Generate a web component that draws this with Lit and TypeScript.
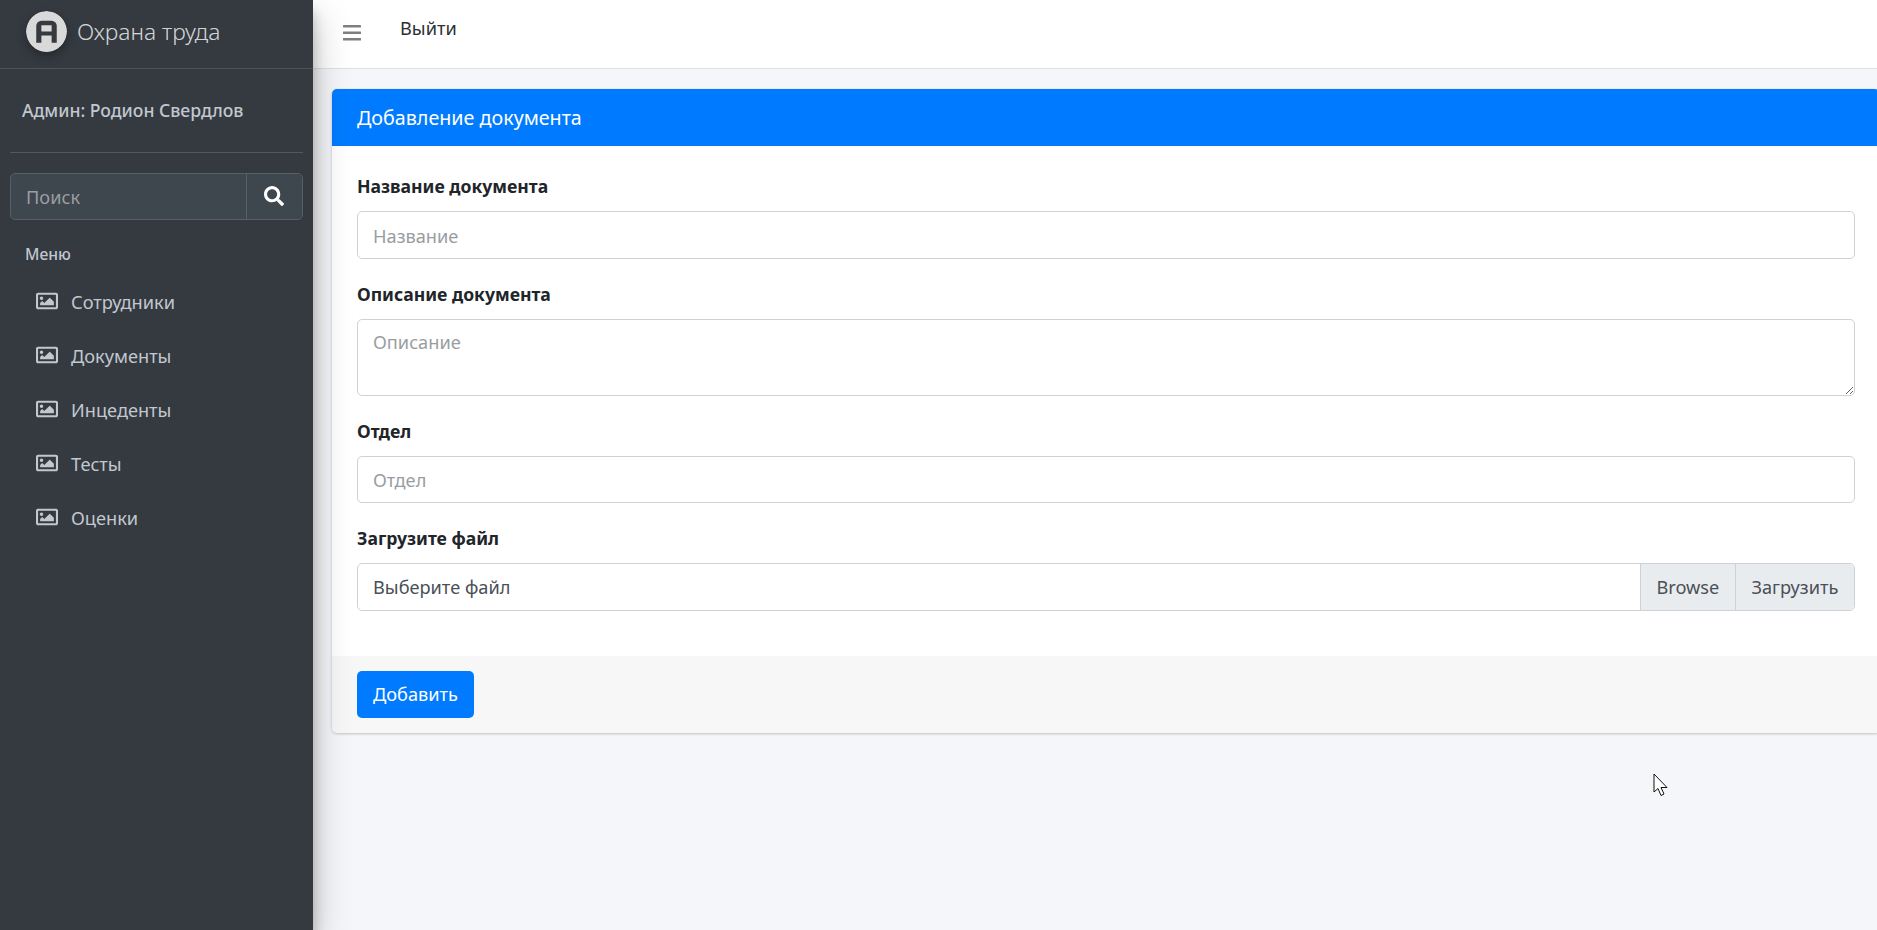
import { css, html, LitElement, svg } from 'lit';
import { customElement } from 'lit/decorators.js';

const imageIcon = svg`<path d="M464 64H48C21.49 64 0 85.49 0 112v288c0 26.51 21.49 48 48 48h416c26.51 0 48-21.49 48-48V112c0-26.51-21.49-48-48-48zm-6 336H54a6 6 0 0 1-6-6V118a6 6 0 0 1 6-6h404a6 6 0 0 1 6 6v276a6 6 0 0 1-6 6zM128 152c-22.091 0-40 17.909-40 40s17.909 40 40 40 40-17.909 40-40-17.909-40-40-40zM96 352h320v-80l-87.515-87.515c-4.686-4.686-12.284-4.686-16.971 0L192 304l-39.515-39.515c-4.686-4.686-12.284-4.686-16.971 0L96 304v48z"/>`;

const menu = ['Сотрудники', 'Документы', 'Инцеденты', 'Тесты', 'Оценки'];

@customElement('app-root')
export class AppRoot extends LitElement {
  static override styles = css`
    :host {
      display: flex;
      height: 100vh;
      overflow: hidden;
      position: relative;
      background: #f4f6f9;
      color: #212529;
      font-family: 'Noto Sans', sans-serif;
      font-size: 18.2px;
      line-height: 1.5;
    }

    * {
      box-sizing: border-box;
    }

    .sidebar {
      flex: 0 0 313px;
      min-width: 0;
      position: relative;
      z-index: 2;
      background: #343a40;
      color: #c2c7d0;
      box-shadow: 0 17px 35px rgba(0, 0, 0, 0.25), 0 12px 12px rgba(0, 0, 0, 0.22);
    }

    .brand {
      height: 69px;
      display: flex;
      align-items: center;
      gap: 10px;
      padding: 0 0 5px 26px;
      border-bottom: 1px solid #4b545c;
      color: rgba(255, 255, 255, 0.8);
      font-size: 22.8px;
      font-weight: 300;
    }

    .brand span {
      padding-top: 2px;
    }

    .logo {
      width: 41px;
      height: 41px;
      border-radius: 50%;
      box-shadow: 0 4px 10px rgba(0, 0, 0, 0.3);
    }

    .user {
      margin: 0 10px;
      padding: 28px 12px 29px;
      border-bottom: 1px solid #4f5962;
      font-size: 17.6px;
      font-weight: 500;
      line-height: 26px;
      white-space: nowrap;
    }

    .search {
      display: flex;
      height: 47px;
      margin: 20px 10px 0;
      border: 1px solid #56606a;
      border-radius: 5px;
      background: #3f474e;
      overflow: hidden;
    }

    .search input {
      flex: 1;
      min-width: 0;
      padding: 2px 15px 0;
      border: 0;
      outline: 0;
      background: transparent;
      font: inherit;
      color: #fff;
    }

    .search input::placeholder {
      color: #9a9ea3;
    }

    .search button {
      flex: 0 0 56px;
      display: flex;
      align-items: center;
      justify-content: center;
      padding: 0 2px 2px 0;
      border: 0;
      border-left: 1px solid #56606a;
      background: #3f474e;
      color: #fff;
    }

    .search svg {
      width: 20px;
      height: 20px;
      fill: currentColor;
    }

    .menu-title {
      padding: 22px 25px 0;
      font-size: 15.7px;
      font-weight: 500;
      line-height: 24px;
    }

    .menu {
      list-style: none;
      margin: 9px 0 0;
      padding: 0;
    }

    .menu li {
      display: flex;
      align-items: center;
      gap: 13px;
      height: 54px;
      padding: 2px 0 0 36px;
    }

    .menu svg {
      width: 22px;
      height: 22px;
      margin-top: -5px;
      fill: currentColor;
    }

    .main {
      flex: 1;
      min-width: 0;
    }

    .topnav {
      height: 69px;
      display: flex;
      align-items: flex-start;
      background: #fff;
      border-bottom: 1px solid #dee2e6;
    }

    .bars {
      width: 18px;
      height: 20px;
      margin: 23px 0 0 30px;
      fill: rgba(0, 0, 0, 0.5);
    }

    .logout {
      margin: 15px 0 0 39px;
      color: #2c3034;
    }

    .content {
      padding: 20px 0 0 19px;
    }

    .card {
      width: 1548px;
      background: #fff;
      border-radius: 5px;
      overflow: hidden;
      box-shadow: 0 0 1px rgba(0, 0, 0, 0.125), 0 1px 3px rgba(0, 0, 0, 0.2);
    }

    .card-head {
      height: 57px;
      display: flex;
      align-items: center;
      padding: 0 25px;
      background: #007bff;
      color: #fff;
      font-size: 19.7px;
    }

    .card-body {
      display: flex;
      flex-direction: column;
      padding: 25px 25px 45px;
    }

    label {
      font-size: 17.6px;
      font-weight: 700;
      line-height: 30px;
      margin-bottom: 10px;
    }

    .field {
      margin-bottom: 20px;
    }

    .control {
      display: block;
      width: 100%;
      height: 47.5px;
      padding: 2px 15px 0;
      border: 1px solid #ced2d6;
      border-radius: 5px;
      outline: 0;
      background: #fff;
      font: inherit;
      color: #495057;
    }

    .control::placeholder {
      color: #999da1;
    }

    textarea.control {
      height: 77px;
      padding-top: 9px;
      resize: vertical;
    }

    .file {
      display: flex;
      height: 48px;
      border: 1px solid #ced2d6;
      border-radius: 5px;
      overflow: hidden;
      color: #495057;
    }

    .file span {
      display: flex;
      align-items: center;
      padding: 1px 15px 0;
    }

    .file .name {
      flex: 1;
    }

    .file .addon {
      padding: 1px 15.6px 0;
      background: #e9ecef;
      border-left: 1px solid #ced2d6;
    }

    .card-foot {
      height: 77px;
      padding: 15px 25px 0;
      background: #f7f7f7;
    }

    .btn {
      height: 47px;
      padding: 0 16px;
      border: 0;
      border-radius: 5px;
      background: #007bff;
      color: #fff;
      font: inherit;
    }

    .cursor {
      position: absolute;
      left: 1653px;
      top: 773px;
      width: 17px;
      height: 24px;
    }
  `;

  override render() {
    return html`
      <aside class="sidebar">
        <div class="brand">
          <svg class="logo" viewBox="0 0 40 40">
            <circle cx="20" cy="20" r="20" fill="#d9d9d9" />
            <path fill="#343a40" fill-rule="evenodd" d="M15 9.500h10a5 5 0 0 1 5 5V31h-5v-7H15v7h-5V14.500a5 5 0 0 1 5-5zM15 14v6h10v-6z" />
          </svg>
          <span>Охрана труда</span>
        </div>
        <div class="user">Админ: Родион Свердлов</div>
        <div class="search">
          <input placeholder="Поиск" />
          <button aria-label="Поиск">
            <svg viewBox="0 0 512 512"><path d="M505 442.700L405.300 343c-4.500-4.500-10.600-7-17-7H372c27.600-35.300 44-79.700 44-128C416 93.100 322.900 0 208 0S0 93.100 0 208s93.100 208 208 208c48.300 0 92.700-16.400 128-44v16.300c0 6.400 2.500 12.500 7 17l99.700 99.700c9.400 9.400 24.600 9.400 33.900 0l28.300-28.300c9.400-9.400 9.400-24.600.1-34zM208 336c-70.700 0-128-57.200-128-128 0-70.700 57.200-128 128-128 70.700 0 128 57.200 128 128 0 70.700-57.200 128-128 128z" /></svg>
          </button>
        </div>
        <div class="menu-title">Меню</div>
        <ul class="menu">
          ${menu.map(
            (item) => html`<li><svg viewBox="0 0 512 512">${imageIcon}</svg>${item}</li>`
          )}
        </ul>
      </aside>
      <div class="main">
        <nav class="topnav">
          <svg class="bars" viewBox="0 0 18 20">
            <rect y="2" width="18" height="2.500" rx="0.500" />
            <rect y="8.500" width="18" height="2.500" rx="0.500" />
            <rect y="15" width="18" height="2.500" rx="0.500" />
          </svg>
          <span class="logout">Выйти</span>
        </nav>
        <div class="content">
          <section class="card">
            <div class="card-head">Добавление документа</div>
            <div class="card-body">
              <label>Название документа</label>
              <input class="control field" placeholder="Название" />
              <label>Описание документа</label>
              <textarea class="control field" placeholder="Описание"></textarea>
              <label>Отдел</label>
              <input class="control field" placeholder="Отдел" />
              <label>Загрузите файл</label>
              <div class="file">
                <span class="name">Выберите файл</span>
                <span class="addon">Browse</span>
                <span class="addon">Загрузить</span>
              </div>
            </div>
            <div class="card-foot"><button class="btn">Добавить</button></div>
          </section>
        </div>
      </div>
      <svg class="cursor" viewBox="0 0 17 24">
        <path d="M1 1v18l4-3.500 3 7 3-1.500-3-6.500h6z" fill="#fff" stroke="#111" stroke-width="1" />
      </svg>
    `;
  }
}

declare global {
  interface HTMLElementTagNameMap {
    'app-root': AppRoot;
  }
}
